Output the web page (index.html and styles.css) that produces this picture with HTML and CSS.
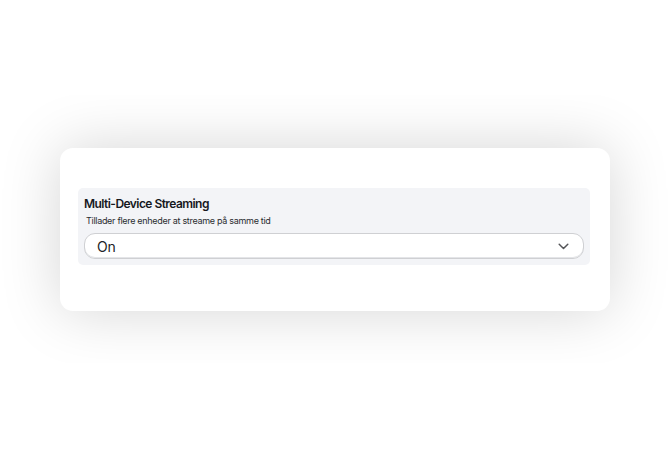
FILE: index.html
```html
<!DOCTYPE html>
<html lang="da">
<head>
<meta charset="utf-8">
<title>Multi-Device Streaming</title>
<link rel="stylesheet" href="styles.css">
</head>
<body>
<div class="stage">
  <div class="card">
    <div class="setting">
      <div class="setting-title">Multi-Device Streaming</div>
      <div class="setting-desc">Tillader flere enheder at streame på samme tid</div>
      <div class="select">
        <span class="select-value">On</span>
        <svg class="chevron" width="11" height="7" viewBox="0 0 11 7" aria-hidden="true">
          <path d="M1.2 1.3 L5.5 5.5 L9.8 1.3" fill="none" stroke="#555659" stroke-width="1.5" stroke-linecap="round" stroke-linejoin="round"/>
        </svg>
      </div>
    </div>
  </div>
</div>
</body>
</html>
```
FILE: styles.css
```css
html, body {
  margin: 0;
  padding: 0;
  background: #ffffff;
  width: 670px;
  height: 460px;
  overflow: hidden;
  font-family: Inter, "Liberation Sans", sans-serif;
  color: #1d1d1f;
}

.stage {
  margin-top: 95px;
  height: 268px;
  overflow: hidden;
  padding: 53px 60px 0 60px;
  box-sizing: border-box;
}

.card {
  background: #ffffff;
  border-radius: 13px;
  height: 163px;
  box-shadow: 0 0 60px rgba(0, 0, 0, 0.17);
  padding: 40px 20px 0 18px;
  box-sizing: border-box;
}

.setting {
  background: #f3f4f7;
  border-radius: 5px;
  height: 77px;
  box-sizing: border-box;
  padding: 8px 6px 0 6px;
}

.setting-title {
  font-size: 12px;
  font-weight: 600;
  letter-spacing: -0.55px;
  line-height: 15px;
  color: #16181d;
}

.setting-desc {
  font-size: 9px;
  line-height: 12px;
  letter-spacing: -0.3px;
  color: #2a2c30;
  margin-top: 4px;
  padding-left: 2px;
}

.select {
  margin-top: 6px;
  height: 26px;
  box-sizing: border-box;
  border: 1px solid #cfd0d3;
  border-radius: 11px;
  background: #ffffff;
  box-shadow: inset 0 -1px 0 #e4e5e8;
  display: flex;
  align-items: center;
  justify-content: space-between;
  padding: 0 14px 0 12px;
}

.select-value {
  font-size: 14px;
  color: #222326;
  letter-spacing: -0.1px;
}

.chevron {
  display: block;
}
```
